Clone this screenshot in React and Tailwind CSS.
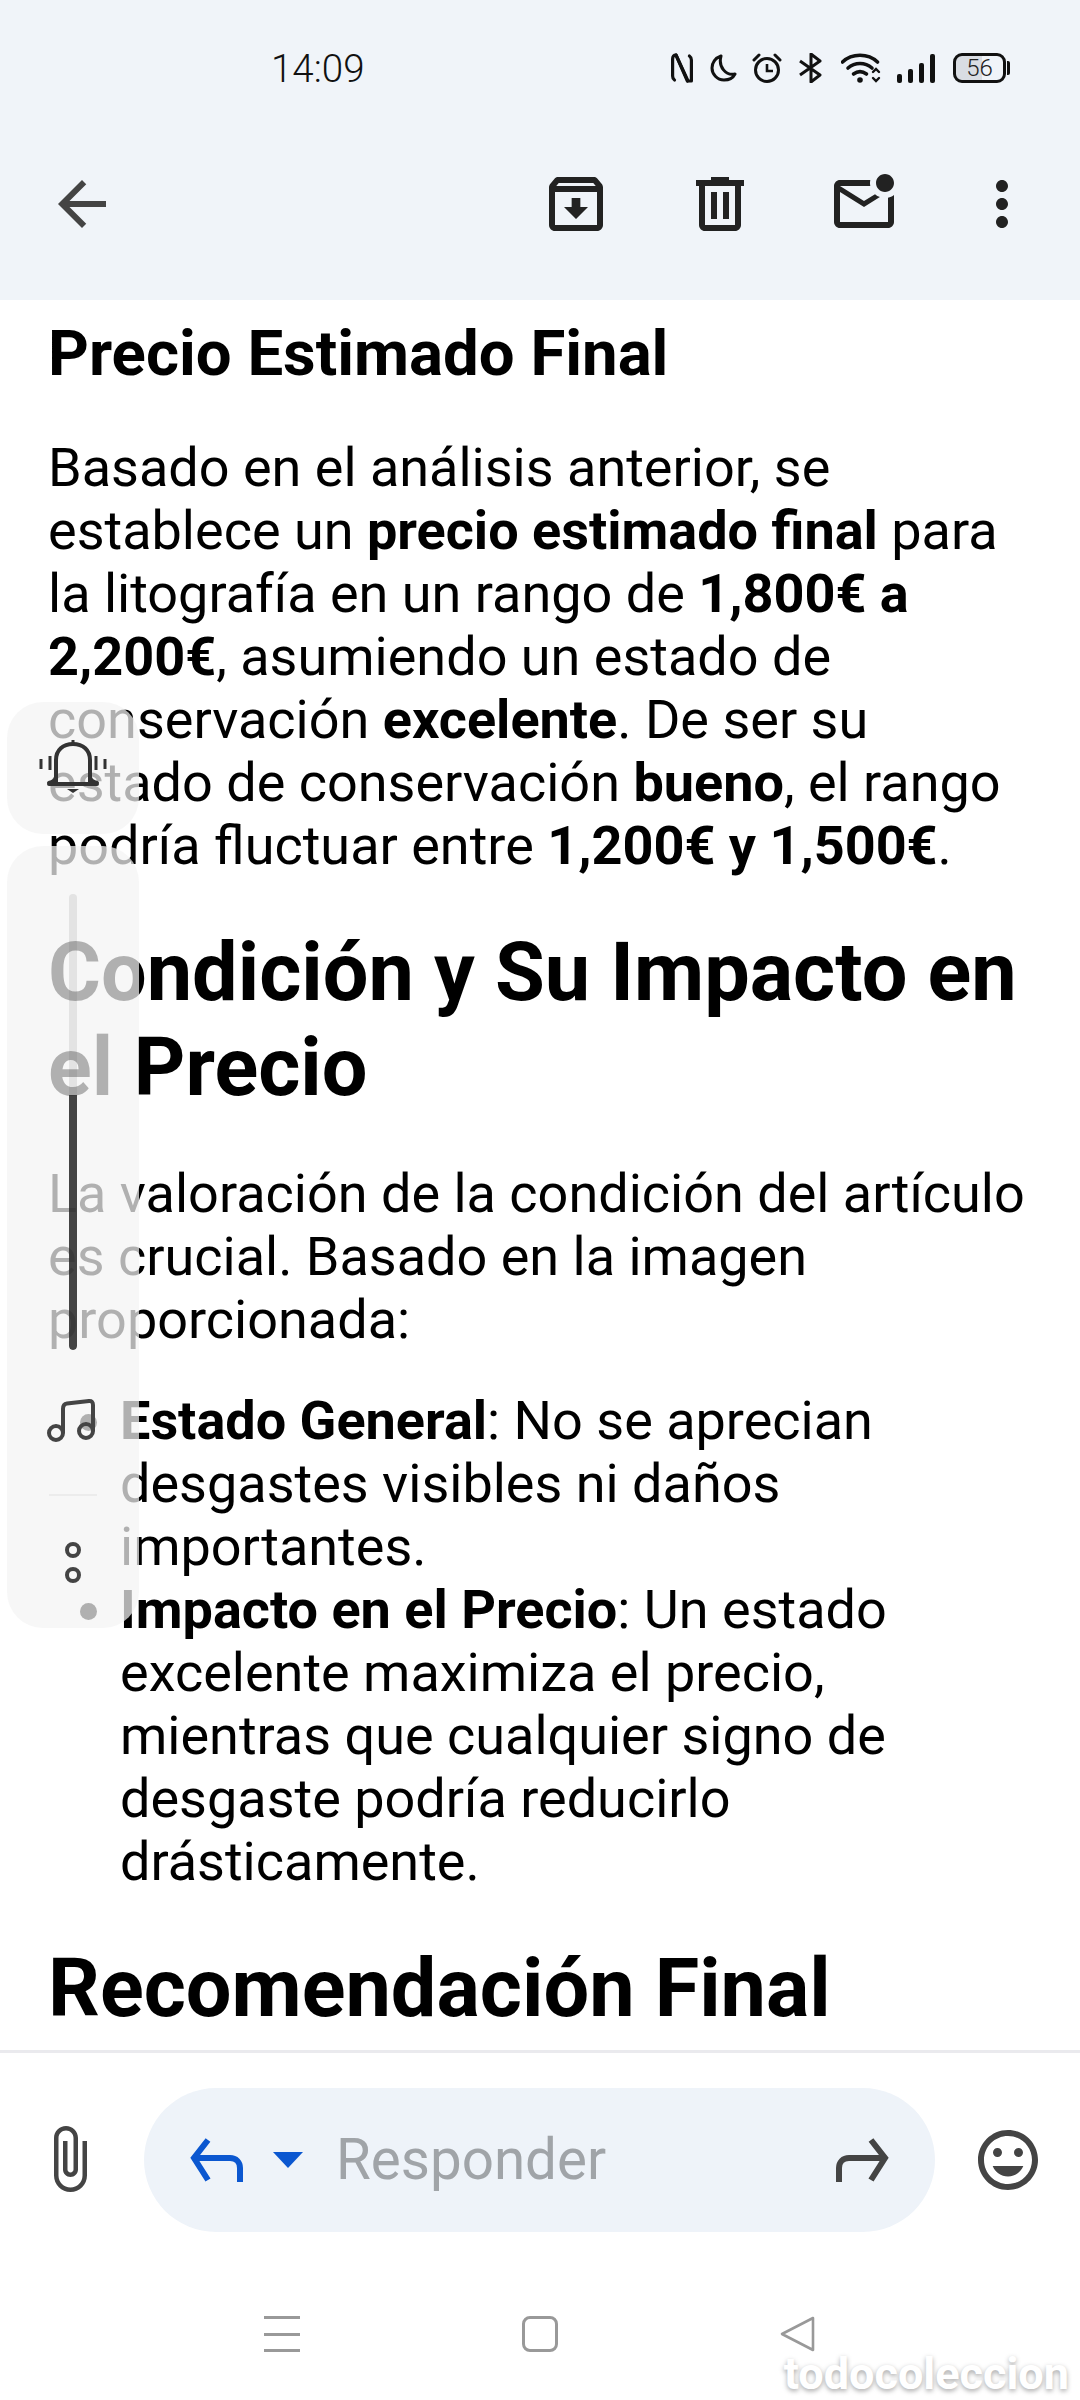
import React from "react";

const Icon = ({ d, size = 72, className = "", fill = "currentColor" }) => (
  <svg width={size} height={size} viewBox="0 0 24 24" fill={fill} className={className}>
    <path d={d} />
  </svg>
);

const ICONS = {
  back: "M20 11H7.83l5.59-5.59L12 4l-8 8 8 8 1.41-1.41L7.83 13H20v-2z",
  archive:
    "M20.54 5.23l-1.39-1.68C18.88 3.21 18.47 3 18 3H6c-.47 0-.88.21-1.16.55L3.46 5.23C3.17 5.57 3 6.02 3 6.5V19c0 1.1.9 2 2 2h14c1.1 0 2-.9 2-2V6.5c0-.48-.17-.93-.46-1.27zM6.24 5h11.52l.83 1H5.42l.82-1zM5 19V8h14v11H5zm8.45-9h-2.9v3H8l4 4 4-4h-2.55z",
  trash:
    "M15 4V3H9v1H4v2h1v13c0 1.1.9 2 2 2h10c1.1 0 2-.9 2-2V6h1V4h-5zm2 15H7V6h10v13zM9 8h2v9H9V8zm4 0h2v9h-2V8z",
  unread:
    "M22 8.98V18c0 1.1-.9 2-2 2H4c-1.1 0-2-.9-2-2V6c0-1.1.9-2 2-2h10.1c-.06.32-.1.66-.1 1s.04.68.1 1H4l8 5 3.67-2.29c.47.43 1.02.76 1.63.98L12 13 4 8v10h16V9.9c.74-.15 1.42-.48 2-.92zM16 5c0 1.66 1.34 3 3 3s3-1.34 3-3-1.34-3-3-3-3 1.34-3 3z",
  dots:
    "M12 8c1.1 0 2-.9 2-2s-.9-2-2-2-2 .9-2 2 .9 2 2 2zm0 2c-1.1 0-2 .9-2 2s.9 2 2 2 2-.9 2-2-.9-2-2-2zm0 6c-1.1 0-2 .9-2 2s.9 2 2 2 2-.9 2-2-.9-2-2-2z",
  clip:
    "M16.5 6v11.5c0 2.21-1.79 4-4 4s-4-1.79-4-4V5c0-1.38 1.12-2.5 2.5-2.5s2.5 1.12 2.5 2.5v10.5c0 .55-.45 1-1 1s-1-.45-1-1V6H10v9.5c0 1.38 1.12 2.5 2.5 2.5s2.5-1.12 2.5-2.5V5c0-2.21-1.79-4-4-4S7 2.79 7 5v12.5c0 3.04 2.46 5.5 5.5 5.5s5.5-2.46 5.5-5.5V6h-1.5z",
  smile:
    "M11.99 2C6.47 2 2 6.48 2 12s4.47 10 9.99 10C17.52 22 22 17.52 22 12S17.52 2 11.99 2zM12 20c-4.42 0-8-3.58-8-8s3.58-8 8-8 8 3.58 8 8-3.58 8-8 8zm3.5-9c.83 0 1.5-.67 1.5-1.5S16.33 8 15.5 8 14 8.67 14 9.5s.67 1.5 1.5 1.5zm-7 0c.83 0 1.5-.67 1.5-1.5S9.33 8 8.5 8 7 8.67 7 9.5 7.67 11 8.5 11zm3.5 6.5c2.33 0 4.31-1.46 5.11-3.5H6.89c.8 2.04 2.78 3.5 5.11 3.5z",
};

// Status bar glyphs, each sized to its own box.
function StatusIcons() {
  return (
    <div className="flex items-center text-[#111]">
      <svg width="22" height="30" viewBox="0 0 22 30" fill="none" stroke="currentColor" strokeWidth="3.2" strokeLinejoin="round" strokeLinecap="round">
        <path d="M3.500 27C2 26 1.600 25 1.600 23V6C1.600 3 3 2 5 2l12 26h3.400V7c0-2-.6-3-2-4" />
        <path d="M5 2l11.400 26" />
      </svg>
      <svg className="ml-[17px]" width="27" height="28" viewBox="0 0 27 28" fill="none" stroke="currentColor" strokeWidth="3">
        <path d="M11 2C5 4 2 9 2 14c0 6 5 12 12 12 5 0 9-2 11-6-9 2-17-7-14-18z" strokeLinejoin="round" />
      </svg>
      <svg className="ml-[15px]" width="30" height="30" viewBox="0 0 30 30" fill="none" stroke="currentColor" strokeWidth="3">
        <circle cx="15" cy="17" r="11.5" />
        <path d="M15 11v7h6" strokeWidth="2.6" />
        <path d="M2 7l5-5M28 7l-5-5" strokeLinecap="round" />
      </svg>
      <svg className="ml-[17px]" width="23" height="30" viewBox="0 0 23 30" fill="none" stroke="currentColor" strokeWidth="3">
        <path d="M1 8l20 14-9 7V1l9 7L1 22" strokeLinejoin="round" />
      </svg>
      <svg className="ml-[19px]" width="41" height="30" viewBox="0 0 41 30" fill="none" stroke="currentColor" strokeWidth="3.6" strokeLinecap="round">
        <path d="M1.500 9C11 0 27 0 36.500 9" />
        <path d="M7 15c7-6 17-6 24 0" />
        <path d="M12.500 21c4-3 9-3 13 0" />
        <circle cx="19" cy="27" r="2.8" fill="currentColor" stroke="none" />
        <path d="M32 19l3-3 3 3M32 25l3 3 3-3" strokeWidth="2.4" />
      </svg>
      <div className="ml-[15px] flex h-[30px] items-end gap-[6px]">
        <div className="h-[9px] w-[5px] rounded-[2px] bg-[#111]" />
        <div className="h-[14px] w-[5px] rounded-[2px] bg-[#111]" />
        <div className="h-[20px] w-[5px] rounded-[2px] bg-[#111]" />
        <div className="h-[29px] w-[5px] rounded-[2px] bg-[#111]" />
      </div>
      <div className="ml-[18px] flex items-center">
        <div className="flex h-[30px] w-[53px] items-center justify-center rounded-[9px] border-[3px] border-[#111] bg-[linear-gradient(90deg,#d9dde3_0_56%,transparent_56%)] text-[24px] leading-none font-light text-[#222]">
          56
        </div>
        <div className="ml-[1px] h-[14px] w-[3px] rounded-r-[2px] bg-[#111]" />
      </div>
    </div>
  );
}

function Toolbar() {
  return (
    <header className="flex h-[300px] shrink-0 flex-col bg-[#f0f4f9]">
      <div className="flex h-[168px] items-start justify-between pt-[47px] pr-[70px] pl-[271px]">
        <span className="text-[38.5px] leading-[44px] font-light text-[#111]">14:09</span>
        <div className="pt-[6px]">
          <StatusIcons />
        </div>
      </div>
      <div className="flex items-center pr-[42px] pl-[46px] text-[#222]">
        <Icon d={ICONS.back} className="text-[#444]" />
        <div className="ml-auto flex items-center">
          <Icon d={ICONS.archive} />
          <Icon d={ICONS.trash} className="ml-[72px]" />
          <Icon d={ICONS.unread} className="ml-[72px]" />
          <Icon d={ICONS.dots} className="ml-[66px]" />
        </div>
      </div>
    </header>
  );
}

function MessageBody() {
  return (
    <main className="min-h-0 flex-1 overflow-hidden pr-[40px] pl-[48px] text-[54px] leading-[63px] text-black">
      <h2 className="mt-[19px] text-[63.5px] leading-[69px] font-bold">Precio Estimado Final</h2>
      <p className="mt-[48px]">
        Basado en el análisis anterior, se establece un <b>precio estimado final</b> para la litografía en un rango de{" "}
        <b>1,800€ a 2,200€</b>, asumiendo un estado de conservación <b>excelente</b>. De ser su estado de conservación{" "}
        <b>bueno</b>, el rango podría fluctuar entre <b>1,200€ y 1,500€</b>.
      </p>
      <h1 className="mt-[48px] text-[81px] leading-[95px] font-bold">Condición y Su Impacto en el Precio</h1>
      <p className="mt-[47px]">
        La valoración de la condición del artículo es crucial. Basado en la imagen proporcionada:
      </p>
      <ul className="mt-[38px] list-disc pl-[72px]">
        <li>
          <b>Estado General</b>: No se aprecian desgastes visibles ni daños importantes.
        </li>
        <li>
          <b>Impacto en el Precio</b>: Un estado excelente maximiza el precio, mientras que cualquier signo de desgaste
          podría reducirlo drásticamente.
        </li>
      </ul>
      <h1 className="mt-[48px] text-[81px] leading-[95px] font-bold">Recomendación Final</h1>
    </main>
  );
}

function ReplyBar() {
  return (
    <div className="flex h-[185px] shrink-0 items-start border-t-[3px] border-[#eaeaee] pt-[35px] text-[#444]">
      <Icon d={ICONS.clip} size={72} className="mt-[35px] ml-[33px] shrink-0" />
      <div className="ml-[39px] flex h-[144px] w-[791px] shrink-0 items-center rounded-full bg-[#eef3f9]">
        <svg className="ml-[45px] shrink-0" width="54" height="44" viewBox="0 0 54 44" fill="none" stroke="#0b57d0" strokeWidth="6">
          <path d="M19 2L5 20l14 22" />
          <path d="M5 20h36c6 0 10 4 10 10v14" />
        </svg>
        <svg className="ml-[30px] shrink-0" width="30" height="16" viewBox="0 0 30 16">
          <path d="M0 0h30L15 16z" fill="#0b57d0" />
        </svg>
        <span className="ml-[33px] text-[56.5px] leading-none text-[#a0a4a8]">Responder</span>
        <svg className="mr-[45px] ml-auto shrink-0" width="54" height="44" viewBox="0 0 54 44" fill="none" stroke="#444" strokeWidth="6">
          <path d="M35 2l14 18-14 22" />
          <path d="M49 20H13C7 20 3 24 3 30v14" />
        </svg>
      </div>
      <Icon d={ICONS.smile} size={72} className="mt-[36px] ml-[37px] shrink-0" />
    </div>
  );
}

function NavBar() {
  return (
    <div className="relative flex h-[165px] shrink-0 items-start pt-[81px]">
      <div className="ml-[264px] flex h-[36px] w-[36px] flex-col justify-between">
        <div className="h-[3px] bg-[#999]" />
        <div className="h-[3px] bg-[#999]" />
        <div className="h-[3px] bg-[#999]" />
      </div>
      <div className="ml-[222px] h-[36px] w-[36px] rounded-[8px] border-[3px] border-[#999]" />
      <svg className="ml-[222px]" width="36" height="36" viewBox="0 0 36 36" fill="none" stroke="#999" strokeWidth="2.6" strokeLinejoin="round">
        <path d="M33 2L2 18l31 16z" />
      </svg>
      <span className="absolute right-[11px] bottom-[4px] text-[45px] leading-[44px] font-bold text-white [text-shadow:0_2px_5px_rgba(0,0,0,0.35)]">
        todocoleccion
      </span>
    </div>
  );
}

// Floating edge panels that sit over the message text.
function EdgePanels() {
  return (
    <>
      <div className="absolute top-[702px] left-[7px] flex h-[132px] w-[132px] items-start justify-center rounded-[36px] bg-[rgba(244,244,244,0.72)] pt-[38px]">
        <svg width="68" height="54" viewBox="0 0 68 54" fill="none" stroke="#333" strokeWidth="4">
          <path d="M17 42V20C17 10 24 4 34 4s17 6 17 16v22" />
          <path d="M10 43c3-1 7-3 7-6M58 43c-3-1-7-3-7-6M10 44h48" strokeLinecap="round" />
          <path d="M28 49h12l-6 4z" fill="#333" stroke="none" />
          <path d="M34 0v4M2 19v10M66 19v10M11 16v14M57 16v14" strokeWidth="3" />
        </svg>
      </div>
      <div className="absolute top-[846px] left-[7px] flex h-[782px] w-[132px] flex-col items-center rounded-[36px] bg-[rgba(244,244,244,0.72)] pt-[48px]">
        <div className="flex h-[456px] w-[8px] flex-col justify-end overflow-hidden rounded-full bg-[rgba(60,60,60,0.1)]">
          <div className="h-[255px] w-full rounded-b-full bg-[rgba(40,40,40,0.85)]" />
        </div>
        <svg className="mt-[47px]" width="52" height="46" viewBox="0 0 52 46" fill="none" stroke="#444" strokeWidth="4">
          <circle cx="9" cy="36" r="7" />
          <circle cx="39" cy="34" r="7" />
          <path d="M16 36V12Q16 7 20 6.500L42 4Q46 3.600 46 8V34" strokeLinejoin="round" />
        </svg>
        <div className="mt-[51px] h-[2px] w-[48px] bg-[#ececec]" />
        <div className="mt-[46px] h-[16px] w-[16px] rounded-full border-[4px] border-[#444]" />
        <div className="mt-[9px] h-[16px] w-[16px] rounded-full border-[4px] border-[#444]" />
      </div>
    </>
  );
}

export default function App() {
  return (
    <div className="relative flex h-[2400px] w-[1080px] flex-col overflow-hidden bg-white font-['Roboto',sans-serif]">
      <Toolbar />
      <MessageBody />
      <ReplyBar />
      <NavBar />
      <EdgePanels />
    </div>
  );
}
